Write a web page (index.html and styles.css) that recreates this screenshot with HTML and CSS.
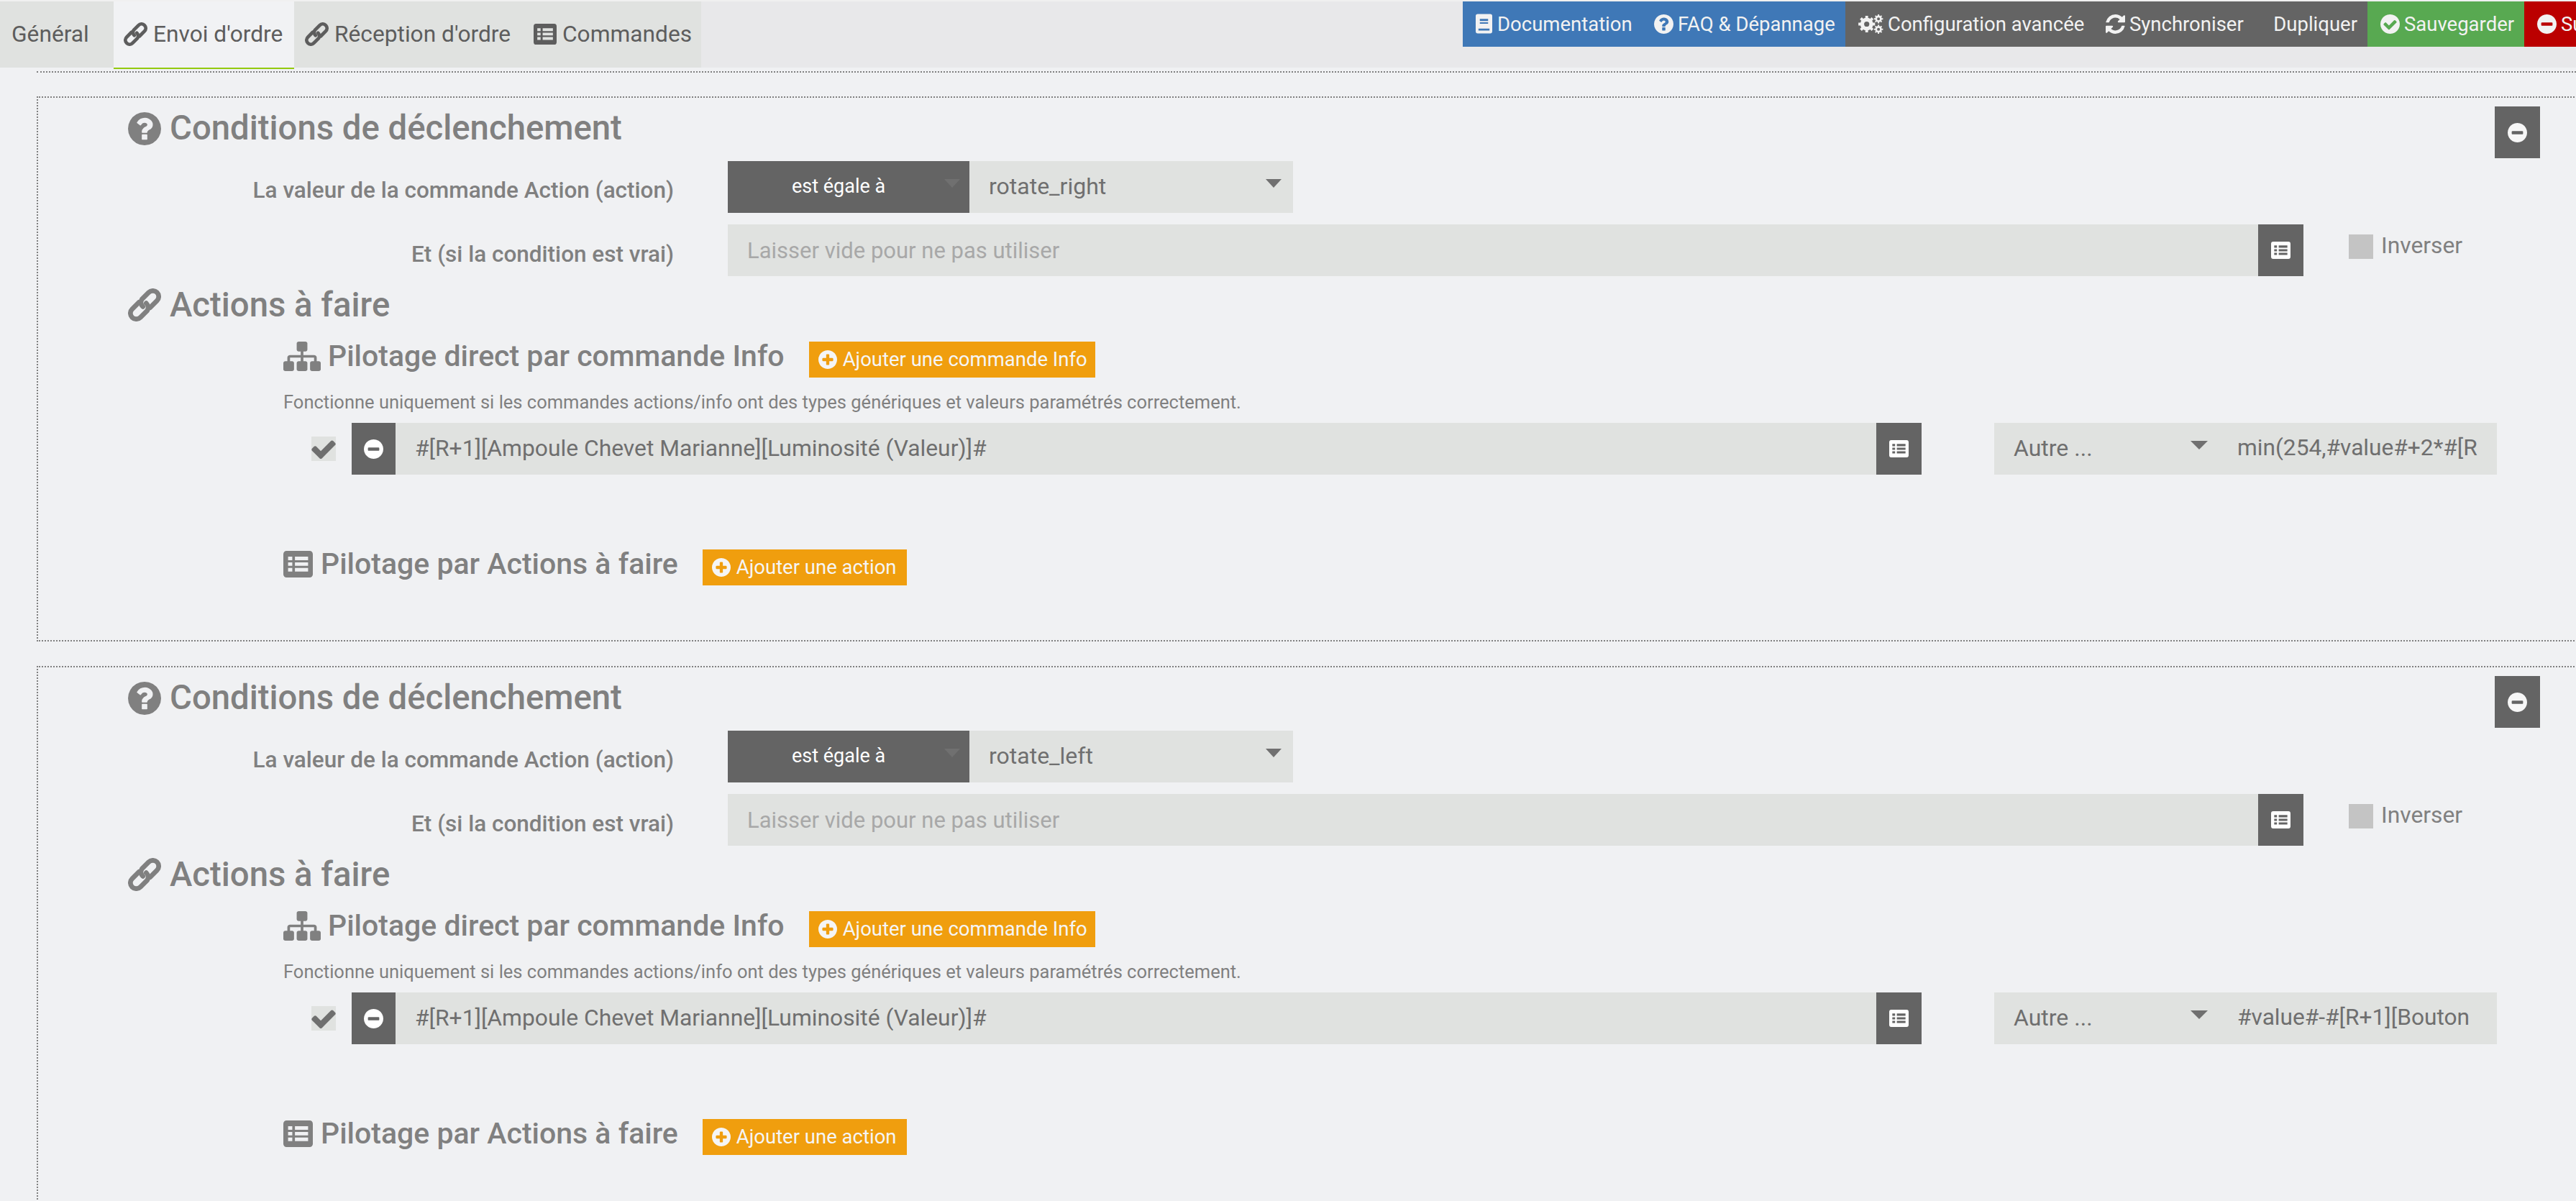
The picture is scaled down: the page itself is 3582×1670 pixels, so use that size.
FILE: index.html
```html
<!DOCTYPE html>
<html lang="fr">
<head>
<meta charset="utf-8">
<title>Envoi d'ordre</title>
<link rel="stylesheet" href="styles.css">
</head>
<body>
<svg class="defs" width="0" height="0" aria-hidden="true">
  <symbol id="i-question" viewBox="128 128 1536 1536">
    <path fill="currentColor" d="M1024 1376v-192q0-14-9-23t-23-9h-192q-14 0-23 9t-9 23v192q0 14 9 23t23 9h192q14 0 23-9t9-23zm256-672q0-88-55.500-163t-138.500-116-170-41q-243 0-371 213-15 24 8 42l132 100q7 6 19 6 16 0 25-12 53-68 86-92 34-24 86-24 48 0 85.500 26t37.500 59q0 38-20 61t-68 45q-63 28-115.500 86.500t-52.500 125.500v36q0 14 9 23t23 9h192q14 0 23-9t9-23q0-19 21.500-49.500t54.500-49.500q32-18 49-28.500t46-35 44.500-48 28-60.500 12.500-81zm384 192q0 209-103 385.500t-279.500 279.500-385.500 103-385.500-103-279.500-279.500-103-385.500 103-385.500 279.500-279.500 385.500-103 385.500 103 279.500 279.500 103 385.500z"/>
  </symbol>
  <symbol id="i-link" viewBox="-24 -24 48 48">
    <g transform="rotate(-45)" fill="none" stroke="currentColor" stroke-width="7" stroke-linecap="round">
      <path d="M-3-8.500H-17A8.500 8.500 0 0 0-17 8.500H-3A8.500 8.500 0 0 0 3.500 0"/>
      <path d="M3 8.500H17A8.500 8.500 0 0 0 17-8.500H3A8.500 8.500 0 0 0-3.500 0"/>
    </g>
  </symbol>
  <symbol id="i-sitemap" viewBox="0 128 1792 1536" preserveAspectRatio="none">
    <path fill="currentColor" d="M1792 1248v320q0 40-28 68t-68 28h-320q-40 0-68-28t-28-68v-320q0-40 28-68t68-28h96v-192h-512v192h96q40 0 68 28t28 68v320q0 40-28 68t-68 28h-320q-40 0-68-28t-28-68v-320q0-40 28-68t68-28h96v-192h-512v192h96q40 0 68 28t28 68v320q0 40-28 68t-68 28h-320q-40 0-68-28t-28-68v-320q0-40 28-68t68-28h96v-192q0-52 38-90t90-38h512v-192h-96q-40 0-68-28t-28-68v-320q0-40 28-68t68-28h320q40 0 68 28t28 68v320q0 40-28 68t-68 28h-96v192h512q52 0 90 38t38 90v192h96q40 0 68 28t28 68z"/>
  </symbol>
  <symbol id="i-list" viewBox="0 0 28 24" preserveAspectRatio="none">
    <path fill="currentColor" fill-rule="evenodd" d="M3 0h22a3 3 0 0 1 3 3v18a3 3 0 0 1-3 3H3a3 3 0 0 1-3-3V3a3 3 0 0 1 3-3zM4.500 5.200v3.200h4V5.200zM11 5.200v3.200h12.500V5.200zM4.500 10.400v3h4v-3zM11 10.400v3h12.500v-3zM4.500 15.400v3.200h4v-3.200zM11 15.400v3.200h12.500v-3.200z"/>
  </symbol>
  <symbol id="i-minus" viewBox="128 128 1536 1536">
    <path fill="currentColor" d="M1344 960v-128q0-26-19-45t-45-19h-768q-26 0-45 19t-19 45v128q0 26 19 45t45 19h768q26 0 45-19t19-45zm320-64q0 209-103 385.500t-279.500 279.500-385.500 103-385.500-103-279.500-279.500-103-385.500 103-385.500 279.500-279.500 385.500-103 385.500 103 279.500 279.500 103 385.500z"/>
  </symbol>
  <symbol id="i-plus" viewBox="128 128 1536 1536">
    <path fill="currentColor" d="M1344 960v-128q0-26-19-45t-45-19h-256v-256q0-26-19-45t-45-19h-128q-26 0-45 19t-19 45v256h-256q-26 0-45 19t-19 45v128q0 26 19 45t45 19h256v256q0 26 19 45t45 19h128q26 0 45-19t19-45v-256h256q26 0 45-19t19-45zm320-64q0 209-103 385.500t-279.500 279.500-385.500 103-385.500-103-279.500-279.500-103-385.500 103-385.500 279.500-279.500 385.500-103 385.500 103 279.500 279.500 103 385.500z"/>
  </symbol>
  <symbol id="i-checkc" viewBox="128 128 1536 1536">
    <path fill="currentColor" d="M1412 734q0-28-18-46l-91-90q-19-19-45-19t-45 19l-408 407-226-226q-19-19-45-19t-45 19l-91 90q-18 18-18 46 0 27 18 45l362 362q19 19 45 19 27 0 46-19l543-543q18-18 18-45zm252 162q0 209-103 385.500t-279.500 279.500-385.500 103-385.500-103-279.500-279.500-103-385.500 103-385.500 279.500-279.500 385.500-103 385.500 103 279.500 279.500 103 385.500z"/>
  </symbol>
  <symbol id="i-check" viewBox="121 270 1550 1250">
    <path fill="currentColor" d="M1671 566q0 40-28 68l-724 724-136 136q-28 28-68 28t-68-28l-136-136-362-362q-28-28-28-68t28-68l136-136q28-28 68-28t68 28l294 295 656-657q28-28 68-28t68 28l136 136q28 28 28 68z"/>
  </symbol>
  <symbol id="i-book" viewBox="0 0 24 28">
    <path fill="currentColor" fill-rule="evenodd" d="M3 0h18a3 3 0 0 1 3 3v22a3 3 0 0 1-3 3H3a3 3 0 0 1-3-3V3a3 3 0 0 1 3-3zM6 7v3h12V7zM6 12v2h12v-2zM4 21v3h16v-3z"/>
  </symbol>
  <symbol id="i-cogs" viewBox="0 0 36 28">
    <g fill="none" stroke="currentColor">
      <circle cx="12" cy="14" r="6.500" stroke-width="5.500"/>
      <path d="M12 2v24M0 14h24M3.500 5.500l17 17M3.500 22.500l17-17" stroke-width="4" stroke-dasharray="4 16"/>
      <circle cx="29" cy="6.500" r="3.500" stroke-width="2.800"/>
      <path d="M29 0v13M22.500 6.500h13M24.400 2l9.200 9M24.400 11l9.200-9" stroke-width="2" stroke-dasharray="2.200 8.600"/>
      <circle cx="29" cy="21.500" r="3.500" stroke-width="2.800"/>
      <path d="M29 15v13M22.500 21.500h13M24.400 17l9.200 9M24.400 26l9.200-9" stroke-width="2" stroke-dasharray="2.200 8.600"/>
    </g>
  </symbol>
  <symbol id="i-sync" viewBox="128 128 1536 1536">
    <path fill="currentColor" d="M1639 1056q0 5-1 7-64 268-268 434.500t-478 166.500q-146 0-282.500-55t-243.500-157l-129 129q-19 19-45 19t-45-19-19-45v-448q0-26 19-45t45-19h448q26 0 45 19t19 45-19 45l-137 137q71 66 161 102t187 36q134 0 250-65t186-179q11-17 53-117 8-23 30-23h192q13 0 22.500 9.500t9.500 22.500zm25-800v448q0 26-19 45t-45 19h-448q-26 0-45-19t-19-45 19-45l138-138q-148-137-349-137-134 0-250 65t-186 179q-11 17-53 117-8 23-30 23h-199q-13 0-22.500-9.500t-9.500-22.500v-7q65-268 270-434.500t480-166.500q146 0 284 55.500t245 156.500l130-129q19-19 45-19t45 19 19 45z"/>
  </symbol>
</svg>

<header class="topbar">
  <nav class="tabs">
    <div class="tab tab-first">Général</div>
    <div class="tab tab-active"><svg class="ic ic-tab"><use href="#i-link"/></svg>Envoi d'ordre</div>
    <div class="tab tab-third"><svg class="ic ic-tab"><use href="#i-link"/></svg>Réception d'ordre</div>
    <div class="tab tab-last"><svg class="ic ic-tablist"><use href="#i-list"/></svg>Commandes</div>
  </nav>
  <div class="actions">
    <div class="btn btn-blue btn-doc"><svg class="ic ic-book"><use href="#i-book"/></svg>Documentation</div>
    <div class="btn btn-blue btn-faq"><svg class="ic ic-btn"><use href="#i-question"/></svg>FAQ &amp; Dépannage</div>
    <div class="btn btn-gray btn-conf"><svg class="ic ic-cogs"><use href="#i-cogs"/></svg>Configuration avancée</div>
    <div class="btn btn-gray btn-sync"><svg class="ic ic-btn"><use href="#i-sync"/></svg>Synchroniser</div>
    <div class="btn btn-gray btn-dup">Dupliquer</div>
    <div class="btn btn-green"><svg class="ic ic-btn"><use href="#i-checkc"/></svg>Sauvegarder</div>
    <div class="btn btn-red"><svg class="ic ic-btn"><use href="#i-minus"/></svg>Supprimer</div>
  </div>
</header>

<main>
  <div class="prev-edge"></div>

  <section class="panel">
    <div class="body">
      <div class="head-row">
        <h3 class="h-main"><svg class="ic ic-h"><use href="#i-question"/></svg>Conditions de déclenchement</h3>
        <div class="square"><svg class="ic ic-sq"><use href="#i-minus"/></svg></div>
      </div>
      <div class="form-row row-first">
        <div class="label">La valeur de la commande Action (action)</div>
        <div class="select select-dark">est égale à</div>
        <div class="select select-light">rotate_right</div>
      </div>
      <div class="form-row row-second">
        <div class="label">Et (si la condition est vrai)</div>
        <div class="input input-wide placeholder">Laisser vide pour ne pas utiliser</div>
        <div class="square-list"><svg class="ic ic-sl"><use href="#i-list"/></svg></div>
        <div class="check-box"></div>
        <div class="inverse">Inverser</div>
      </div>
      <h3 class="h-main h-actions"><svg class="ic ic-h"><use href="#i-link"/></svg>Actions à faire</h3>
      <div class="sub-row sub-first">
        <h4 class="h-sub"><svg class="ic ic-site"><use href="#i-sitemap"/></svg>Pilotage direct par commande Info</h4>
        <div class="add add-info"><svg class="ic ic-add"><use href="#i-plus"/></svg>Ajouter une commande Info</div>
      </div>
      <p class="help">Fonctionne uniquement si les commandes actions/info ont des types génériques et valeurs paramétrés correctement.</p>
      <div class="cmd-row">
        <div class="cmd-check"><svg class="ic ic-check"><use href="#i-check"/></svg></div>
        <div class="cmd-minus"><svg class="ic ic-sq"><use href="#i-minus"/></svg></div>
        <div class="input input-cmd">#[R+1][Ampoule Chevet Marianne][Luminosité (Valeur)]#</div>
        <div class="square-list"><svg class="ic ic-sl"><use href="#i-list"/></svg></div>
        <div class="select-autre">Autre ...</div>
        <div class="value">min(254,#value#+2*#[R</div>
      </div>
      <div class="sub-row sub-second">
        <h4 class="h-sub"><svg class="ic ic-list"><use href="#i-list"/></svg>Pilotage par Actions à faire</h4>
        <div class="add add-action"><svg class="ic ic-add"><use href="#i-plus"/></svg>Ajouter une action</div>
      </div>
    </div>
  </section>

  <section class="panel panel-next">
    <div class="body">
      <div class="head-row">
        <h3 class="h-main"><svg class="ic ic-h"><use href="#i-question"/></svg>Conditions de déclenchement</h3>
        <div class="square"><svg class="ic ic-sq"><use href="#i-minus"/></svg></div>
      </div>
      <div class="form-row row-first">
        <div class="label">La valeur de la commande Action (action)</div>
        <div class="select select-dark">est égale à</div>
        <div class="select select-light">rotate_left</div>
      </div>
      <div class="form-row row-second">
        <div class="label">Et (si la condition est vrai)</div>
        <div class="input input-wide placeholder">Laisser vide pour ne pas utiliser</div>
        <div class="square-list"><svg class="ic ic-sl"><use href="#i-list"/></svg></div>
        <div class="check-box"></div>
        <div class="inverse">Inverser</div>
      </div>
      <h3 class="h-main h-actions"><svg class="ic ic-h"><use href="#i-link"/></svg>Actions à faire</h3>
      <div class="sub-row sub-first">
        <h4 class="h-sub"><svg class="ic ic-site"><use href="#i-sitemap"/></svg>Pilotage direct par commande Info</h4>
        <div class="add add-info"><svg class="ic ic-add"><use href="#i-plus"/></svg>Ajouter une commande Info</div>
      </div>
      <p class="help">Fonctionne uniquement si les commandes actions/info ont des types génériques et valeurs paramétrés correctement.</p>
      <div class="cmd-row">
        <div class="cmd-check"><svg class="ic ic-check"><use href="#i-check"/></svg></div>
        <div class="cmd-minus"><svg class="ic ic-sq"><use href="#i-minus"/></svg></div>
        <div class="input input-cmd">#[R+1][Ampoule Chevet Marianne][Luminosité (Valeur)]#</div>
        <div class="square-list"><svg class="ic ic-sl"><use href="#i-list"/></svg></div>
        <div class="select-autre">Autre ...</div>
        <div class="value">#value#-#[R+1][Bouton</div>
      </div>
      <div class="sub-row sub-second">
        <h4 class="h-sub"><svg class="ic ic-list"><use href="#i-list"/></svg>Pilotage par Actions à faire</h4>
        <div class="add add-action"><svg class="ic ic-add"><use href="#i-plus"/></svg>Ajouter une action</div>
      </div>
    </div>
  </section>
</main>
</body>
</html>
```
FILE: styles.css
```css
* { box-sizing: border-box; }
html, body { margin: 0; height: 1670px; overflow: hidden; }
body { background: #f0f1f3; font-family: Roboto, "Liberation Sans", sans-serif; color: #808080; width: 3582px; }
.defs { position: absolute; }
.ic { display: block; flex: none; }

.topbar { display: flex; height: 94px; padding-top: 2px; background: #e8e8ea; width: 3582px; box-shadow: inset 0 2px 0 #f0f0f0; }
.tabs { display: flex; width: 975px; height: 92px; flex: none; background: #e0e2e0; }
.tab { display: flex; align-items: center; height: 92px; font-size: 31.700px; color: #5d5d5d; padding-bottom: 2px; white-space: nowrap; }
.tab-first { width: 158px; padding-left: 16px; }
.tab-active { width: 251px; background: #f1f2f4; height: 94px; border-bottom: 2px solid #93c90e; padding-left: 14px; }
.tab-third { width: 317px; padding-left: 15px; }
.tab-last { padding-left: 16px; }
.ic-tab { width: 33px; height: 33px; margin-right: 8px; }
.ic-tablist { width: 32px; height: 29px; margin-right: 8px; }

.actions { display: flex; flex: none; margin-left: 1059px; height: 63px; }
.btn { display: flex; align-items: center; height: 63px; color: #f2f2f2; font-size: 27.500px; white-space: nowrap; flex: none; padding-bottom: 1px; }
.btn-blue { background: #3f78b7; }
.btn-gray { background: #646464; }
.btn-green { background: #58a951; width: 218px; padding-left: 18px; }
.btn-red { background: #bb0000; padding-left: 18px; }
.btn-doc { width: 250px; padding-left: 18px; }
.btn-faq { width: 282px; padding-left: 16px; }
.btn-conf { width: 347px; padding-left: 18px; }
.btn-sync { width: 231px; padding-left: 15px; }
.btn-dup { width: 148px; justify-content: flex-end; padding-right: 14px; }
.ic-book { width: 23px; height: 28px; margin-right: 7px; }
.ic-btn { width: 27px; height: 27px; margin-right: 6px; }
.ic-cogs { width: 35px; height: 27px; margin-right: 6px; }

.prev-edge { height: 2px; margin: 5px 0 0 51px; border-bottom: 2px dotted #808080; }
.panel { margin: 33px 0 0 51px; width: 3600px; height: 758px; border-top: 2px dotted #808080; border-left: 2px dotted #808080; border-bottom: 2px dotted #808080; }
.panel-next { margin-top: 34px; }
.body { width: 3479px; padding-top: 12px; }

.head-row { display: flex; justify-content: space-between; align-items: flex-start; height: 72px; }
.h-main { display: flex; align-items: center; margin: 0; padding-left: 125px; font-size: 47.300px; font-weight: 500; line-height: 61px; color: #808080; white-space: nowrap; }
.ic-h { width: 46px; height: 46px; margin-right: 12px; }
.square { width: 63px; height: 72px; background: #646464; display: flex; align-items: center; justify-content: center; color: #f7f7f7; }
.ic-sq { width: 27px; height: 27px; }

.form-row { display: flex; height: 72px; }
.row-first { margin-top: 4px; }
.row-second { margin-top: 16px; }
.label { width: 884px; text-align: right; font-size: 31.500px; font-weight: 500; line-height: 82px; margin-right: 75px; white-space: nowrap; }
.row-second .label { line-height: 84px; }
.select { height: 72px; font-size: 32px; line-height: 71px; position: relative; }
.select::after { content: ""; position: absolute; top: 25px; border: 11.500px solid transparent; border-top: 12px solid #707070; border-bottom: 0; }
.select-dark { width: 336px; background: #646464; color: #fff; font-size: 27px; padding-left: 89px; }
.select-dark::after { right: 13px; }
.select-light { width: 450px; background: #e0e2e0; color: #6f6f6f; padding-left: 27px; }
.select-light::after { right: 16px; }
.input { height: 72px; background: #e0e2e0; font-size: 31.800px; line-height: 70px; color: #6f6f6f; padding-left: 27px; white-space: nowrap; overflow: hidden; }
.input-wide { width: 2128px; }
.placeholder { color: #a8a8a8; font-size: 31px; line-height: 73px; }
.square-list { width: 63px; height: 72px; background: #646464; display: flex; align-items: center; justify-content: center; color: #fff; }
.ic-sl { width: 27px; height: 24px; }
.check-box { width: 34px; height: 34px; background: #c4c4c4; margin: 14px 11px 0 63px; }
.inverse { font-size: 31.800px; line-height: 58px; }

.h-actions { margin-top: 10px; height: 60px; }
.sub-row { display: flex; align-items: center; height: 50px; padding-left: 341px; }
.sub-first { margin-top: 21px; }
.sub-second { margin-top: 104px; }
.h-sub { display: flex; align-items: center; margin: 0; font-size: 41px; font-weight: 500; color: #808080; white-space: nowrap; padding-bottom: 10px; }
.ic-site { width: 52px; height: 41px; margin-right: 10px; }
.ic-list { width: 41px; height: 37px; margin-right: 11px; }
.add { display: flex; align-items: center; height: 50px; background: #f09e0e; color: #f5f5f5; font-size: 27.500px; margin-left: 34px; padding: 0 0 1px 13px; white-space: nowrap; }
.add-info { width: 398px; }
.add-action { width: 284px; }
.ic-add { width: 26px; height: 26px; margin-right: 8px; }

.help { margin: 20px 0 0 341px; font-size: 25.500px; line-height: 28px; color: #808080; white-space: nowrap; height: 28px; }
.cmd-row { display: flex; height: 72px; margin-top: 15px; padding-left: 380px; }
.cmd-check { width: 34px; height: 34px; margin: 19px 22px 0 0; background: #e0e2e0; display: flex; align-items: center; justify-content: center; color: #6f6f6f; }
.ic-check { width: 34px; height: 27px; }
.cmd-minus { width: 61px; height: 72px; background: #646464; display: flex; align-items: center; justify-content: center; color: #fff; }
.input-cmd { width: 2059px; }
.select-autre { width: 338px; height: 72px; margin-left: 101px; background: #e0e2e0; font-size: 32px; line-height: 70px; color: #6f6f6f; padding-left: 27px; position: relative; }
.select-autre::after { content: ""; position: absolute; top: 25px; right: 41px; border: 12.500px solid transparent; border-top: 12px solid #707070; border-bottom: 0; }
.value { width: 361px; height: 72px; background: #e0e2e0; font-size: 31.700px; line-height: 70px; color: #6f6f6f; white-space: nowrap; overflow: hidden; }
```
